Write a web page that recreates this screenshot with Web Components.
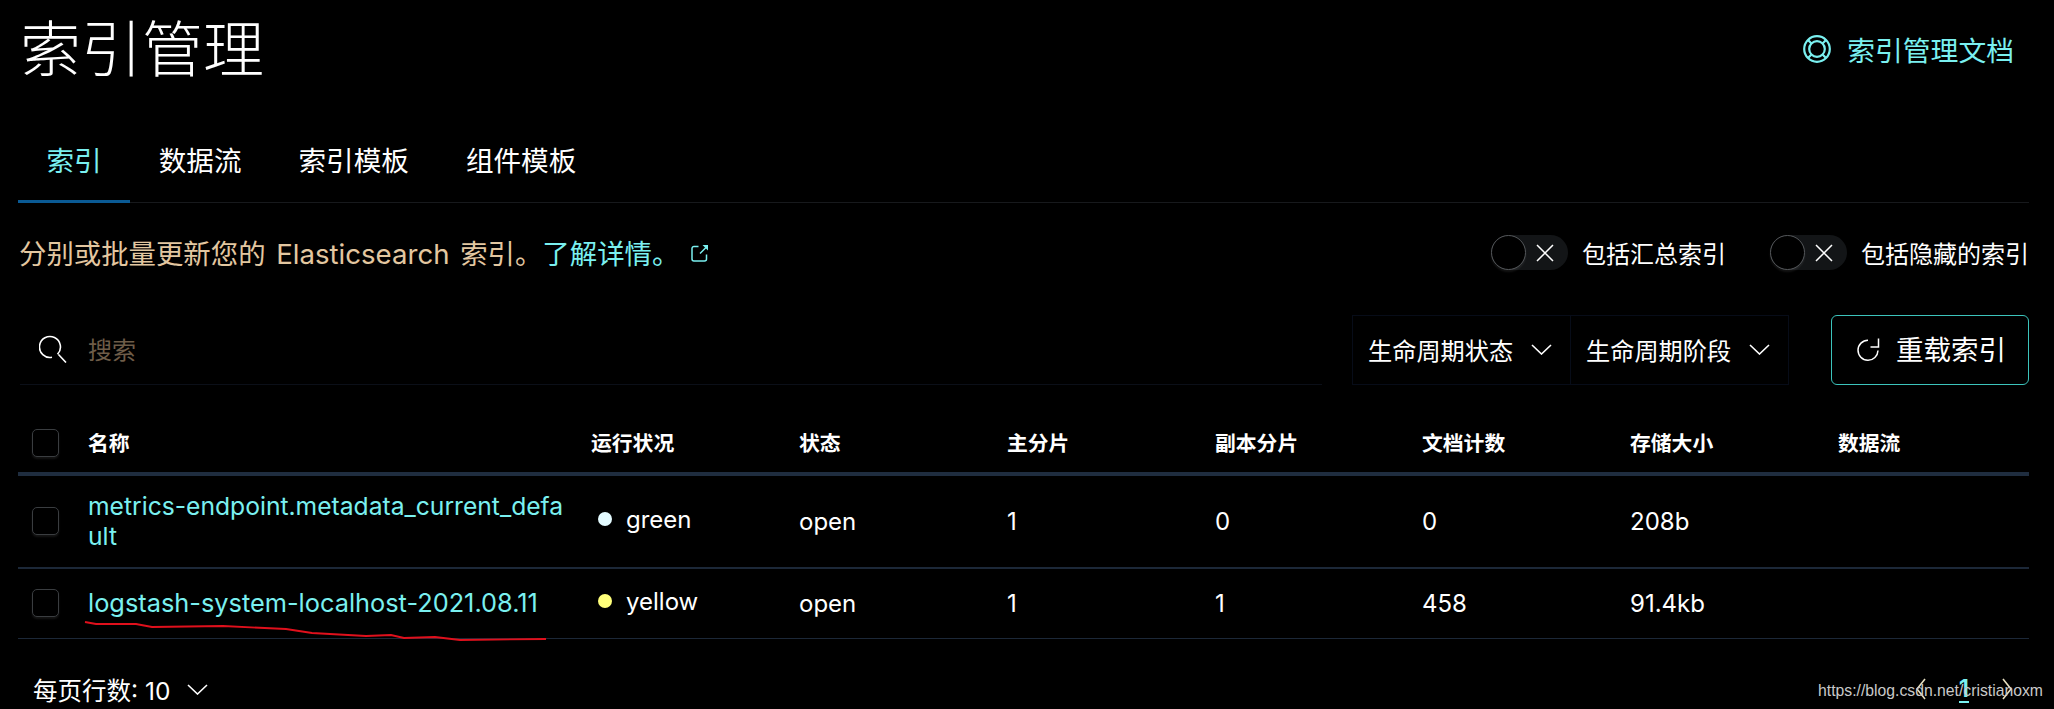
<!DOCTYPE html>
<html>
<head>
<meta charset="utf-8">
<title>索引管理</title>
<style>
  html, body { margin: 0; background: #000; }
  body {
    width: 2054px;
    height: 709px;
    overflow: hidden;
    position: relative;
    color: #fff;
    font-family: Inter, "Noto Sans CJK SC", sans-serif;
  }
</style>
</head>
<body>
<index-page></index-page>

<template id="chevron">
  <svg width="21" height="11" viewBox="0 0 21 11" fill="none" stroke="currentColor" stroke-width="1.6"><path d="M1 1l9.500 9L20 1"/></svg>
</template>

<script>
/* global HTMLElement */
const chevron = document.getElementById('chevron').innerHTML
const cyan = '#7af0f0'

class IndexHeader extends HTMLElement {
  constructor () {
    super()
    this.attachShadow({ mode: 'open' })
  }

  connectedCallback () {
    this.shadowRoot.innerHTML = `
      <style>
        :host { display: flex; justify-content: space-between; align-items: center; height: 98px; }
        h1 { margin: 2px 0 0 20px; font-size: 61px; line-height: 72px; font-weight: 300; color: #fff; }
        a { display: flex; align-items: center; gap: 16px; margin-right: 40px; font-size: 27.8px; color: ${cyan}; }
      </style>
      <h1>索引管理</h1>
      <a>
        <svg width="28" height="28" viewBox="0 0 28 28" fill="none" stroke="currentColor" stroke-width="2.2">
          <circle cx="14" cy="14" r="12.8"/>
          <circle cx="14" cy="14" r="7.8"/>
          <path d="M8.500 8.500L5 5M19.500 8.500L23 5M8.500 19.500L5 23M19.500 19.500l3.500 3.500"/>
        </svg>
        <span>索引管理文档</span>
      </a>
    `
  }
}

class IndexTabs extends HTMLElement {
  constructor () {
    super()
    this.attachShadow({ mode: 'open' })
  }

  connectedCallback () {
    const tabs = ['索引', '数据流', '索引模板', '组件模板']
    this.shadowRoot.innerHTML = `
      <style>
        :host { display: flex; align-items: flex-start; margin: 22px 25px 0 18px; border-bottom: 1px solid #17191c; height: 82px; }
        div { padding: 0 28.500px; height: 83px; line-height: 82px; font-size: 27.6px; color: #fff; box-sizing: border-box; }
        .on { color: ${cyan}; border-bottom: 3px solid #0a5a94; }
      </style>
      ${tabs.map((t, i) => `<div class="${i ? '' : 'on'}">${t}</div>`).join('')}
    `
  }
}

class IndexSwitch extends HTMLElement {
  constructor () {
    super()
    this.attachShadow({ mode: 'open' })
  }

  connectedCallback () {
    this.shadowRoot.innerHTML = `
      <style>
        :host { display: flex; align-items: center; gap: 14px; font-size: 24px; color: #fff; }
        .track { position: relative; width: 77px; height: 35px; border-radius: 18px; background: #131517; display: flex; align-items: center; }
        .knob { position: absolute; left: 0; top: 0; width: 33px; height: 33px; border-radius: 50%; border: 1px solid #54575a; background: #000; box-shadow: 0 2px 2px rgba(255,255,255,.08); }
        svg { margin-left: 45px; }
      </style>
      <div class="track">
        <div class="knob"></div>
        <svg width="18" height="18" viewBox="0 0 18 18" stroke="#fff" stroke-width="1.5"><path d="M1 1l16 16M17 1L1 17"/></svg>
      </div>
      <span><slot></slot></span>
    `
  }
}

class IndexDesc extends HTMLElement {
  constructor () {
    super()
    this.attachShadow({ mode: 'open' })
  }

  connectedCallback () {
    this.shadowRoot.innerHTML = `
      <style>
        :host { display: flex; justify-content: space-between; align-items: center; height: 35px; margin: 32px 25px 0 19px; }
        p { margin: -2px 0 0; font-size: 27.4px; word-spacing: 3px; color: #e3c7a0; display: flex; align-items: center; }
        em { font-style: normal; font-size: 27.6px; }
        a { color: ${cyan}; }
        svg { margin-left: 12px; margin-top: 2px; }
        .sw { display: flex; gap: 44px; }
      </style>
      <p><span>分别或批量更新您的 <em>Elasticsearch</em> 索引。<a>了解详情。</a></span>
        <svg width="18" height="18" viewBox="0 0 18 18" fill="none" stroke="${cyan}" stroke-width="1.5">
          <path d="M7.500 2.500H3a2 2 0 0 0-2 2V15a2 2 0 0 0 2 2h10.500a2 2 0 0 0 2-2v-4.500M9 9.500l6-6"/>
          <path d="M11.500 1H17v5.500z" fill="${cyan}" stroke="none"/>
        </svg>
      </p>
      <div class="sw">
        <index-switch>包括汇总索引</index-switch>
        <index-switch>包括隐藏的索引</index-switch>
      </div>
    `
  }
}

class IndexFilter extends HTMLElement {
  constructor () {
    super()
    this.attachShadow({ mode: 'open' })
  }

  connectedCallback () {
    this.shadowRoot.innerHTML = `
      <style>
        :host { display: flex; flex: 1; align-items: center; justify-content: space-between; padding: 0 18px 2px 15px; font-size: 24.2px; color: #fff; }
        span { white-space: nowrap; }
        svg { display: block; flex: none; }
      </style>
      <span><slot></slot></span>${chevron}
    `
  }
}

class IndexToolbar extends HTMLElement {
  constructor () {
    super()
    this.attachShadow({ mode: 'open' })
  }

  connectedCallback () {
    this.shadowRoot.innerHTML = `
      <style>
        :host { display: flex; height: 70px; margin: 45px 25px 0 20px; }
        .search { width: 1302px; box-sizing: border-box; display: flex; align-items: center; gap: 21px; padding: 0 0 2px 19px; border-bottom: 1px solid #0b0f18; font-size: 24px; color: #6e5c48; }
        .filters { display: flex; margin-left: 30px; border: 1px solid #070c18; box-sizing: border-box; width: 437px; }
        index-filter + index-filter { border-left: 1px solid #070c18; }
        button { margin-left: 42px; width: 198px; box-sizing: border-box; display: flex; align-items: center; gap: 16px; padding: 0 0 0 25px; background: #000; border: 1.5px solid #3cc4bc; border-radius: 6px; color: #fff; font: inherit; font-size: 27.5px; }
        button span { position: relative; top: -2px; }
      </style>
      <div class="search">
        <svg width="28" height="28" viewBox="0 0 28 28" fill="none" stroke="#fff" stroke-width="1.6">
          <path d="M13 22.300A10.500 10.500 0 1 1 18.500 19.300M19.500 19.500l7.500 8"/>
        </svg>
        <span>搜索</span>
      </div>
      <div class="filters">
        <index-filter>生命周期状态</index-filter>
        <index-filter>生命周期阶段</index-filter>
      </div>
      <button>
        <svg width="23" height="26" viewBox="0 0 23 26" fill="none" stroke="#fff" stroke-width="1.5">
          <path d="M21 13.500A10 10 0 1 1 11 3.200M13.500 10H21.500V1.500"/>
        </svg>
        <span>重载索引</span>
      </button>
    `
  }
}

class IndexCheck extends HTMLElement {
  constructor () {
    super()
    this.attachShadow({ mode: 'open' })
  }

  connectedCallback () {
    this.shadowRoot.innerHTML = `
      <style>
        :host { display: block; width: 27px; height: 28px; box-sizing: border-box; border: 1px solid #3a3d40; border-radius: 5px; background: #000; box-shadow: 0 2px 2px rgba(255,255,255,.08); }
      </style>
    `
  }
}

const columns = '70px 503px 208px 208px 208px 207px 208px 208px 191px'

class IndexTableHead extends HTMLElement {
  constructor () {
    super()
    this.attachShadow({ mode: 'open' })
  }

  connectedCallback () {
    const heads = ['名称', '运行状况', '状态', '主分片', '副本分片', '文档计数', '存储大小', '数据流']
    this.shadowRoot.innerHTML = `
      <style>
        :host { display: grid; grid-template-columns: ${columns}; align-items: center; height: 91px; margin: 0 25px 0 18px; box-sizing: border-box; border-bottom: 4px solid #1f2d3f; padding-top: 26px; font-size: 20.8px; font-weight: 700; color: #fff; }
        index-check { margin: 2px 0 0 14px; }
      </style>
      <index-check></index-check>
      ${heads.map(h => `<div>${h}</div>`).join('')}
    `
  }
}

class IndexRow extends HTMLElement {
  constructor () {
    super()
    this.attachShadow({ mode: 'open' })
  }

  connectedCallback () {
    const a = n => this.getAttribute(n) || ''
    this.shadowRoot.innerHTML = `
      <style>
        :host { display: grid; grid-template-columns: ${columns}; align-items: center; margin: 0 25px 0 18px; box-sizing: border-box; padding-bottom: 1px; border-bottom: 2px solid #1c2838; font-size: 24px; color: #fff; }
        :host([last]) { border-bottom-width: 1px; }
        index-check { margin-left: 14px; }
        a { display: block; color: ${cyan}; font-size: var(--name-size); line-height: 30px; width: 476px; word-break: break-all; }
        .health { display: flex; align-items: center; gap: 14px; padding-left: 7px; transform: translateY(-2px); }
        .dot { width: 14px; height: 14px; border-radius: 50%; background: var(--dot); }
      </style>
      <index-check></index-check>
      <a>${a('name')}</a>
      <div class="health" style="--dot:${a('dot')}"><span class="dot"></span><span>${a('health')}</span></div>
      <div>open</div>
      <div>${a('primary')}</div>
      <div>${a('replica')}</div>
      <div>${a('docs')}</div>
      <div>${a('size')}</div>
      <div></div>
    `
  }
}

class IndexPager extends HTMLElement {
  constructor () {
    super()
    this.attachShadow({ mode: 'open' })
  }

  connectedCallback () {
    this.shadowRoot.innerHTML = `
      <style>
        :host { display: flex; justify-content: space-between; align-items: center; height: 70px; box-sizing: border-box; padding: 30px 42px 0 33px; font-size: 24.5px; color: #fff; }
        .size { display: flex; align-items: center; gap: 17px; }
        .pages { display: flex; align-items: center; gap: 33px; }
        .pages b { font-weight: 600; color: ${cyan}; border-bottom: 2px solid ${cyan}; line-height: 26px; }
        svg { display: block; }
      </style>
      <div class="size"><span>每页行数: 10</span>${chevron}</div>
      <div class="pages">
        <svg width="10" height="22" viewBox="0 0 10 22" fill="none" stroke="#e8e0c0" stroke-width="1.6"><path d="M9 1L1 11l8 10"/></svg>
        <b>1</b>
        <svg width="10" height="22" viewBox="0 0 10 22" fill="none" stroke="#e8e0c0" stroke-width="1.6"><path d="M1 1l8 10-8 10"/></svg>
      </div>
    `
  }
}

class IndexPage extends HTMLElement {
  constructor () {
    super()
    this.attachShadow({ mode: 'open' })
  }

  connectedCallback () {
    this.shadowRoot.innerHTML = `
      <style>
        :host { display: block; width: 2054px; height: 709px; }
        .r1 { height: 93px; --name-size: 24.65px; }
        .r2 { height: 70px; --name-size: 25.35px; }
        .mark { position: absolute; left: 1818px; top: 682px; font: 15.750px "Liberation Sans", sans-serif; color: #c9c9c9; }
        .pen { position: absolute; left: 0; top: 0; pointer-events: none; }
      </style>
      <index-header></index-header>
      <index-tabs></index-tabs>
      <index-desc></index-desc>
      <index-toolbar></index-toolbar>
      <index-table-head></index-table-head>
      <index-row class="r1" name="metrics-endpoint.metadata_current_default" health="green" dot="#e4fbff" primary="1" replica="0" docs="0" size="208b"></index-row>
      <index-row class="r2" last name="logstash-system-localhost-2021.08.11" health="yellow" dot="#ffff7a" primary="1" replica="1" docs="458" size="91.4kb"></index-row>
      <index-pager></index-pager>
      <svg class="pen" width="2054" height="709" fill="none" stroke="#e0101c" stroke-width="1.8">
        <path d="M85 622L96 624L136 624L152 627L223 626L286 629L312 633L366 636L391 635L404 638L435 637L460 640L546 639"/>
      </svg>
      <div class="mark">https://blog.csdn.net/cristianoxm</div>
    `
  }
}

customElements.define('index-header', IndexHeader)
customElements.define('index-tabs', IndexTabs)
customElements.define('index-switch', IndexSwitch)
customElements.define('index-desc', IndexDesc)
customElements.define('index-filter', IndexFilter)
customElements.define('index-toolbar', IndexToolbar)
customElements.define('index-check', IndexCheck)
customElements.define('index-table-head', IndexTableHead)
customElements.define('index-row', IndexRow)
customElements.define('index-pager', IndexPager)
customElements.define('index-page', IndexPage)
</script>
</body>
</html>
